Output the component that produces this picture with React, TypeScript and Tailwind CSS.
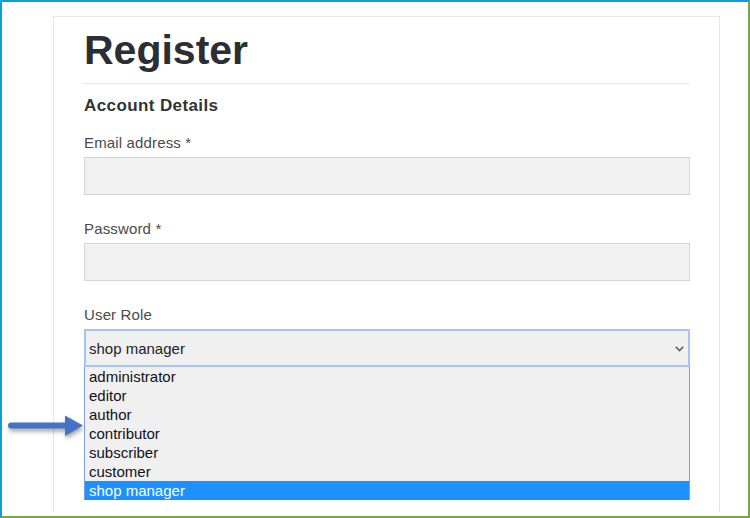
const ROLES = ['administrator', 'editor', 'author', 'contributor', 'subscriber', 'customer', 'shop manager'];

function Field({ label }: { label: string }) {
  return (
    <div className="mt-[24px] first:mt-[15px]">
      <label className="block text-[15px] leading-[20px] tracking-[0.15px] text-[#4a4a4a]">{label}</label>
      <div className="mt-[4px] h-[38px] border border-[#d5d5d5] bg-[#f1f1f1]" />
    </div>
  );
}

export default function App() {
  return (
    <div
      className="relative box-border h-[518px] w-[750px] overflow-hidden border-2 border-t-[#0a9ee0] border-l-[#0a9ee0] border-r-[#77a93c] border-b-[#77a93c] bg-white pl-[51px] pt-[14px]"
      style={{ fontFamily: '"Liberation Sans", Arial, sans-serif' }}
    >
      <div className="box-border h-[496px] w-[667px] overflow-hidden border-x border-t border-[#e6e6e6] pl-[30px] pr-[29px] pt-[9px]">
        <h1 className="text-[41px] font-bold leading-[48px] text-[#2b2e33]">Register</h1>
        <div className="mt-[9px] h-px bg-[#e6e6e6]" />
        <h2 className="mt-[10px] text-[17px] font-bold leading-[24px] tracking-[0.4px] text-[#333]">Account Details</h2>

        <div>
          <Field label="Email address *" />
          <Field label="Password *" />

          <div className="mt-[24px]">
            <label className="block text-[15px] leading-[20px] tracking-[0.15px] text-[#4a4a4a]">User Role</label>
            <div className="mt-[4px] box-border flex h-[38px] items-center justify-between border-2 border-[#a6c3f2] bg-[#f0f0f0] pl-[3px] pr-[4px]">
              <span className="pt-[1px] text-[15px] leading-[20px] text-[#222]">shop manager</span>
              <svg width="9" height="6" viewBox="0 0 9 6" className="mt-[1px]">
                <polyline points="0.8,0.8 4.5,4.6 8.2,0.8" fill="none" stroke="#5a5a5a" strokeWidth="1.5" />
              </svg>
            </div>
            <ul className="border-x border-[#7b9de2] bg-[#f0f0f0]">
              {ROLES.map((role) => (
                <li
                  key={role}
                  className={
                    role === 'shop manager'
                      ? 'h-[19px] bg-[#1e90ff] pl-[4px] text-[15px] leading-[19px] text-white'
                      : 'h-[19px] pl-[4px] text-[15px] leading-[19px] text-[#0f1020]'
                  }
                >
                  {role}
                </li>
              ))}
            </ul>
          </div>
        </div>
      </div>

      {/* annotation arrow */}
      <svg
        className="pointer-events-none absolute left-[2px] top-[408px] drop-shadow-[1px_3px_2px_rgba(0,0,0,0.35)]"
        width="84"
        height="32"
        viewBox="4 410 84 32"
      >
        <path
          d="M11 422.5 L65 422.5 L65 415.5 L83 425.5 L65 436 L65 428.5 L11 428.5 A3 3 0 0 1 11 422.5 Z"
          fill="#4472c4"
        />
      </svg>
    </div>
  );
}
